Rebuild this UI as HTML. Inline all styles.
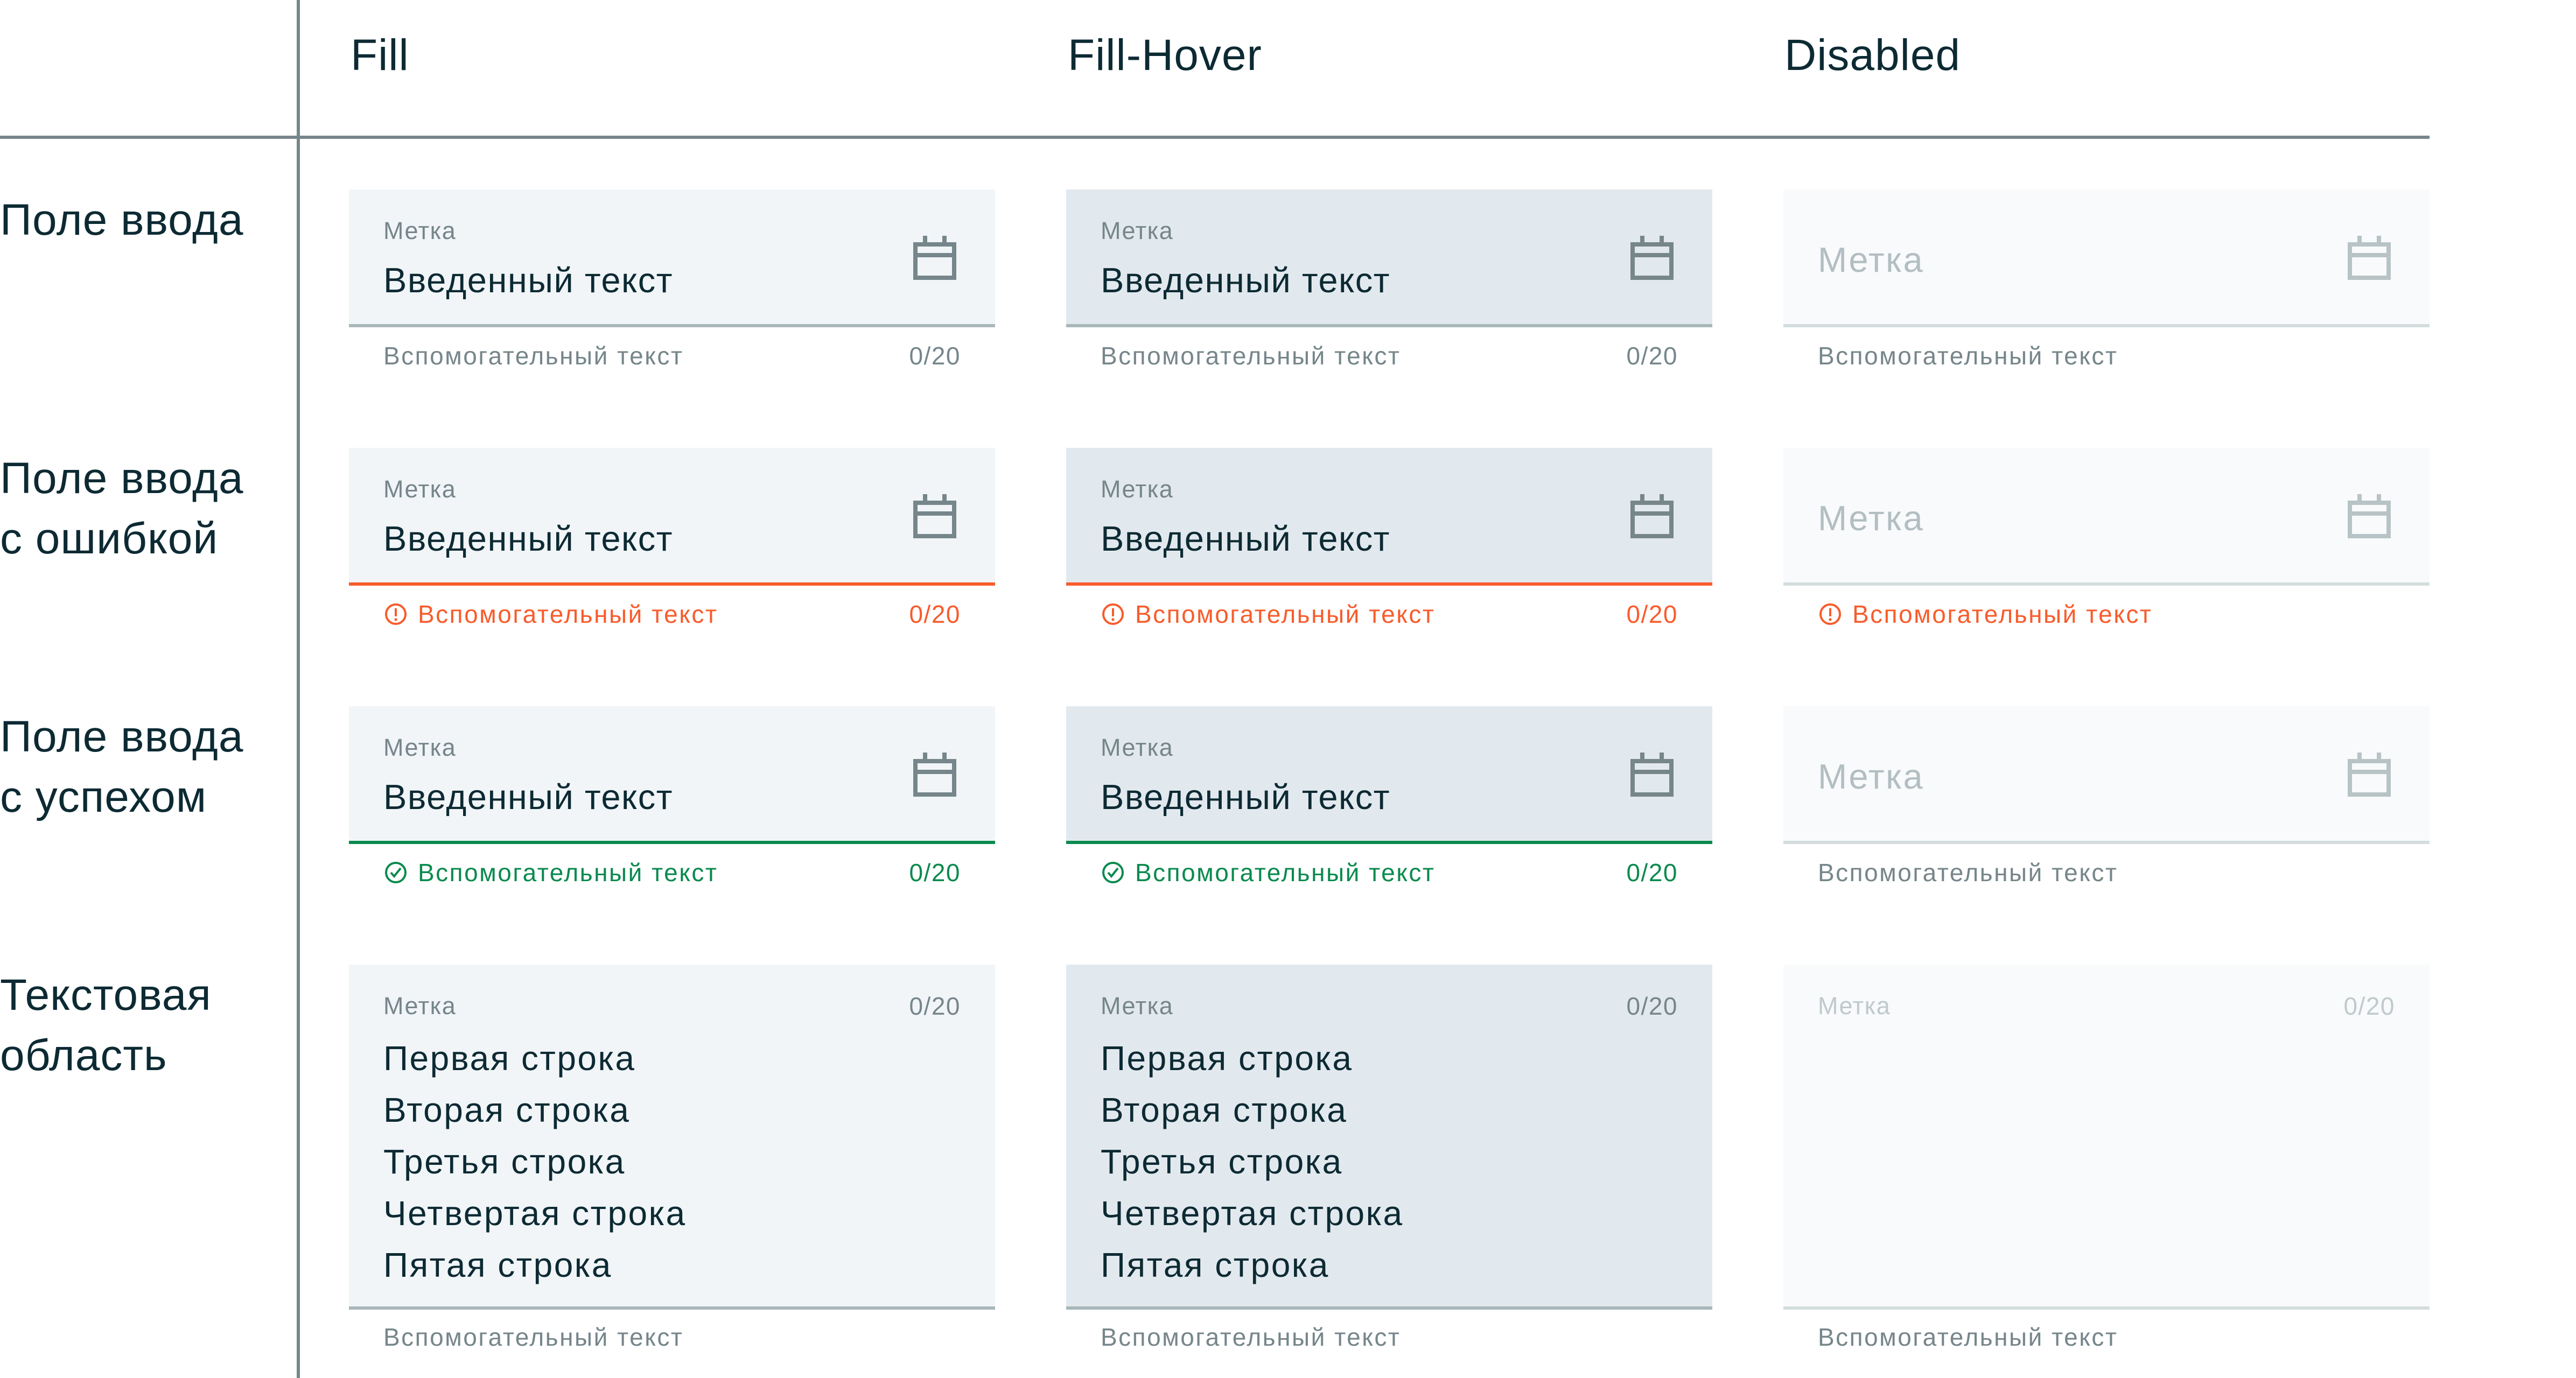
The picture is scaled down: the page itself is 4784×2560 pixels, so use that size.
<!DOCTYPE html>
<html><head><meta charset="utf-8"><style>
*{margin:0;padding:0;box-sizing:border-box}
body{width:4784px;height:2560px;background:#fff;position:relative;overflow:hidden;font-family:"Liberation Sans","DejaVu Sans",sans-serif;color:#0d2a33}
.a{position:absolute;white-space:nowrap;line-height:1}
.h{font-size:82px;letter-spacing:1px}
.box{position:absolute;width:1200px;height:250px}
.ul{position:absolute;width:1200px;height:6px}
.f{background:#f1f5f8}.hv{background:#e2e9ee}.d{background:#f8fafb}
.lb{font-size:45px;color:#76868b;letter-spacing:1.5px}
.val{font-size:65px;letter-spacing:1.5px}
.hp{font-size:46px;color:#76868b;letter-spacing:2.5px}
.ph{font-size:65px;color:#b3bec2;letter-spacing:2.5px}
.ct{font-size:46px;color:#76868b;text-align:right;width:200px;letter-spacing:1.5px}
.err{color:#f85c2c}.ok{color:#0a8a4e}
.tl{font-size:64px;letter-spacing:2.5px}
svg{position:absolute}
</style></head><body>
<div class="a" style="left:551px;top:0;width:6px;height:2560px;background:#76868b"></div>
<div class="a" style="left:0;top:252px;width:4512px;height:6px;background:#76868b"></div>

<div class="a h" style="left:651px;top:62px">Fill</div>
<div class="a h" style="left:1983px;top:62px">Fill-Hover</div>
<div class="a h" style="left:3314px;top:62px">Disabled</div>

<div class="a h" style="left:0;top:368px">Поле ввода</div>
<div class="a h" style="left:0;top:848px">Поле ввода</div>
<div class="a h" style="left:0;top:960px">с ошибкой</div>
<div class="a h" style="left:0;top:1328px">Поле ввода</div>
<div class="a h" style="left:0;top:1440px">с успехом</div>
<div class="a h" style="left:0;top:1808px">Текстовая</div>
<div class="a h" style="left:0;top:1920px">область</div>

<!-- ROW 1 T=352 -->
<div class="box f" style="left:648px;top:352px"></div><div class="ul" style="left:648px;top:602px;background:#a9b7bb"></div>
<div class="a lb" style="left:712px;top:406px">Метка</div>
<div class="a val" style="left:712px;top:488px">Введенный текст</div>
<svg style="left:1696px;top:438px" width="80" height="82" viewBox="0 0 80 82"><g fill="none" stroke="#76868b" stroke-width="8"><rect x="4" y="16" width="72" height="62"/><path d="M4 36H76M22 0V16M58 0V16"/></g></svg>
<div class="a hp" style="left:712px;top:638px">Вспомогательный текст</div>
<div class="a ct" style="left:1584px;top:638px">0/20</div>

<div class="box hv" style="left:1980px;top:352px"></div><div class="ul" style="left:1980px;top:602px;background:#a9b7bb"></div>
<div class="a lb" style="left:2044px;top:406px">Метка</div>
<div class="a val" style="left:2044px;top:488px">Введенный текст</div>
<svg style="left:3028px;top:438px" width="80" height="82" viewBox="0 0 80 82"><g fill="none" stroke="#76868b" stroke-width="8"><rect x="4" y="16" width="72" height="62"/><path d="M4 36H76M22 0V16M58 0V16"/></g></svg>
<div class="a hp" style="left:2044px;top:638px">Вспомогательный текст</div>
<div class="a ct" style="left:2916px;top:638px">0/20</div>

<div class="box d" style="left:3312px;top:352px"></div><div class="ul" style="left:3312px;top:602px;background:#d4dddd"></div>
<div class="a ph" style="left:3376px;top:450px">Метка</div>
<svg style="left:4360px;top:438px" width="80" height="82" viewBox="0 0 80 82"><g fill="none" stroke="#b8c3c6" stroke-width="8"><rect x="4" y="16" width="72" height="62"/><path d="M4 36H76M22 0V16M58 0V16"/></g></svg>
<div class="a hp" style="left:3376px;top:638px">Вспомогательный текст</div>

<!-- ROW 2 T=832 -->
<div class="box f" style="left:648px;top:832px"></div><div class="ul" style="left:648px;top:1082px;background:#f85c2c"></div>
<div class="a lb" style="left:712px;top:886px">Метка</div>
<div class="a val" style="left:712px;top:968px">Введенный текст</div>
<svg style="left:1696px;top:918px" width="80" height="82" viewBox="0 0 80 82"><g fill="none" stroke="#76868b" stroke-width="8"><rect x="4" y="16" width="72" height="62"/><path d="M4 36H76M22 0V16M58 0V16"/></g></svg>
<svg style="left:714px;top:1120px" width="42" height="42" viewBox="0 0 42 42"><circle cx="21" cy="21" r="18" fill="none" stroke="#f85c2c" stroke-width="4"/><path d="M21 10V25" stroke="#f85c2c" stroke-width="4"/><circle cx="21" cy="31" r="2.6" fill="#f85c2c"/></svg>
<div class="a hp err" style="left:776px;top:1118px">Вспомогательный текст</div>
<div class="a ct err" style="left:1584px;top:1118px">0/20</div>

<div class="box hv" style="left:1980px;top:832px"></div><div class="ul" style="left:1980px;top:1082px;background:#f85c2c"></div>
<div class="a lb" style="left:2044px;top:886px">Метка</div>
<div class="a val" style="left:2044px;top:968px">Введенный текст</div>
<svg style="left:3028px;top:918px" width="80" height="82" viewBox="0 0 80 82"><g fill="none" stroke="#76868b" stroke-width="8"><rect x="4" y="16" width="72" height="62"/><path d="M4 36H76M22 0V16M58 0V16"/></g></svg>
<svg style="left:2046px;top:1120px" width="42" height="42" viewBox="0 0 42 42"><circle cx="21" cy="21" r="18" fill="none" stroke="#f85c2c" stroke-width="4"/><path d="M21 10V25" stroke="#f85c2c" stroke-width="4"/><circle cx="21" cy="31" r="2.6" fill="#f85c2c"/></svg>
<div class="a hp err" style="left:2108px;top:1118px">Вспомогательный текст</div>
<div class="a ct err" style="left:2916px;top:1118px">0/20</div>

<div class="box d" style="left:3312px;top:832px"></div><div class="ul" style="left:3312px;top:1082px;background:#d4dddd"></div>
<div class="a ph" style="left:3376px;top:930px">Метка</div>
<svg style="left:4360px;top:918px" width="80" height="82" viewBox="0 0 80 82"><g fill="none" stroke="#b8c3c6" stroke-width="8"><rect x="4" y="16" width="72" height="62"/><path d="M4 36H76M22 0V16M58 0V16"/></g></svg>
<svg style="left:3378px;top:1120px" width="42" height="42" viewBox="0 0 42 42"><circle cx="21" cy="21" r="18" fill="none" stroke="#f85c2c" stroke-width="4"/><path d="M21 10V25" stroke="#f85c2c" stroke-width="4"/><circle cx="21" cy="31" r="2.6" fill="#f85c2c"/></svg>
<div class="a hp err" style="left:3440px;top:1118px">Вспомогательный текст</div>

<!-- ROW 3 T=1312 -->
<div class="box f" style="left:648px;top:1312px"></div><div class="ul" style="left:648px;top:1562px;background:#0a8a4e"></div>
<div class="a lb" style="left:712px;top:1366px">Метка</div>
<div class="a val" style="left:712px;top:1448px">Введенный текст</div>
<svg style="left:1696px;top:1398px" width="80" height="82" viewBox="0 0 80 82"><g fill="none" stroke="#76868b" stroke-width="8"><rect x="4" y="16" width="72" height="62"/><path d="M4 36H76M22 0V16M58 0V16"/></g></svg>
<svg style="left:714px;top:1600px" width="42" height="42" viewBox="0 0 42 42"><circle cx="21" cy="21" r="18" fill="none" stroke="#0a8a4e" stroke-width="4"/><path d="M12 21L18 28L30 13" fill="none" stroke="#0a8a4e" stroke-width="4"/></svg>
<div class="a hp ok" style="left:776px;top:1598px">Вспомогательный текст</div>
<div class="a ct ok" style="left:1584px;top:1598px">0/20</div>

<div class="box hv" style="left:1980px;top:1312px"></div><div class="ul" style="left:1980px;top:1562px;background:#0a8a4e"></div>
<div class="a lb" style="left:2044px;top:1366px">Метка</div>
<div class="a val" style="left:2044px;top:1448px">Введенный текст</div>
<svg style="left:3028px;top:1398px" width="80" height="82" viewBox="0 0 80 82"><g fill="none" stroke="#76868b" stroke-width="8"><rect x="4" y="16" width="72" height="62"/><path d="M4 36H76M22 0V16M58 0V16"/></g></svg>
<svg style="left:2046px;top:1600px" width="42" height="42" viewBox="0 0 42 42"><circle cx="21" cy="21" r="18" fill="none" stroke="#0a8a4e" stroke-width="4"/><path d="M12 21L18 28L30 13" fill="none" stroke="#0a8a4e" stroke-width="4"/></svg>
<div class="a hp ok" style="left:2108px;top:1598px">Вспомогательный текст</div>
<div class="a ct ok" style="left:2916px;top:1598px">0/20</div>

<div class="box d" style="left:3312px;top:1312px"></div><div class="ul" style="left:3312px;top:1562px;background:#d4dddd"></div>
<div class="a ph" style="left:3376px;top:1410px">Метка</div>
<svg style="left:4360px;top:1398px" width="80" height="82" viewBox="0 0 80 82"><g fill="none" stroke="#b8c3c6" stroke-width="8"><rect x="4" y="16" width="72" height="62"/><path d="M4 36H76M22 0V16M58 0V16"/></g></svg>
<div class="a hp" style="left:3376px;top:1598px">Вспомогательный текст</div>

<!-- ROW 4 T=1792 textarea -->
<div class="box f" style="left:648px;top:1792px;height:635px"></div><div class="ul" style="left:648px;top:2427px;background:#a9b7bb"></div>
<div class="a lb" style="left:712px;top:1846px">Метка</div>
<div class="a ct" style="left:1584px;top:1846px">0/20</div>
<div class="a tl" style="left:712px;top:1934px">Первая строка</div>
<div class="a tl" style="left:712px;top:2030px">Вторая строка</div>
<div class="a tl" style="left:712px;top:2126px">Третья строка</div>
<div class="a tl" style="left:712px;top:2222px">Четвертая строка</div>
<div class="a tl" style="left:712px;top:2318px">Пятая строка</div>
<div class="a hp" style="left:712px;top:2461px">Вспомогательный текст</div>

<div class="box hv" style="left:1980px;top:1792px;height:635px"></div><div class="ul" style="left:1980px;top:2427px;background:#a9b7bb"></div>
<div class="a lb" style="left:2044px;top:1846px">Метка</div>
<div class="a ct" style="left:2916px;top:1846px">0/20</div>
<div class="a tl" style="left:2044px;top:1934px">Первая строка</div>
<div class="a tl" style="left:2044px;top:2030px">Вторая строка</div>
<div class="a tl" style="left:2044px;top:2126px">Третья строка</div>
<div class="a tl" style="left:2044px;top:2222px">Четвертая строка</div>
<div class="a tl" style="left:2044px;top:2318px">Пятая строка</div>
<div class="a hp" style="left:2044px;top:2461px">Вспомогательный текст</div>

<div class="box d" style="left:3312px;top:1792px;height:635px"></div><div class="ul" style="left:3312px;top:2427px;background:#d4dddd"></div>
<div class="a lb" style="left:3376px;top:1846px;color:#c0c9cc">Метка</div>
<div class="a ct" style="left:4248px;top:1846px;color:#c0c9cc">0/20</div>
<div class="a hp" style="left:3376px;top:2461px">Вспомогательный текст</div>
</body></html>
